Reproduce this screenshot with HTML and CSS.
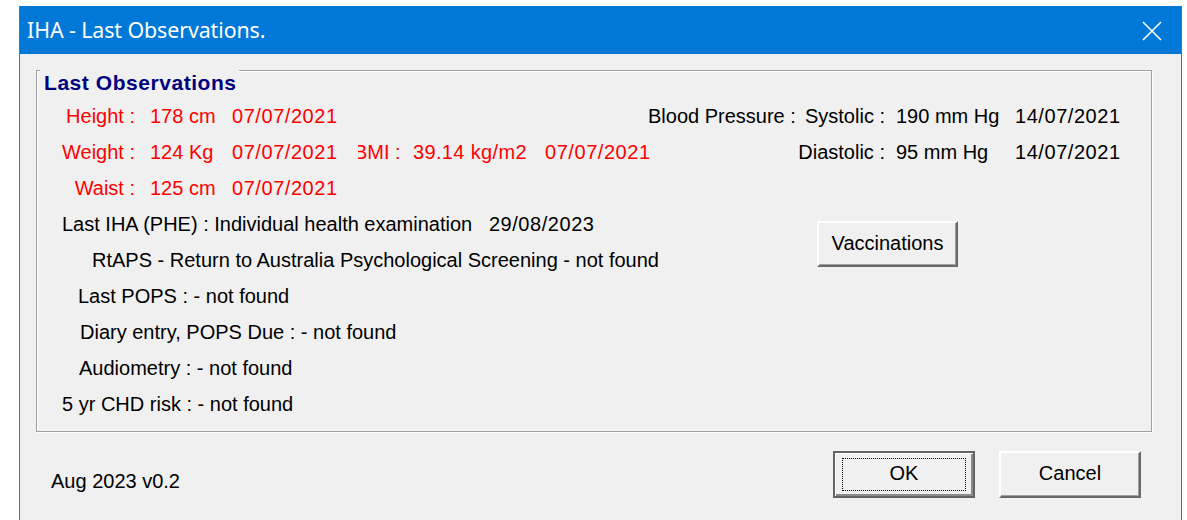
FILE: index.html
```html
<!DOCTYPE html>
<html lang="en">
<head>
<meta charset="utf-8">
<title>IHA - Last Observations.</title>
<link rel="stylesheet" href="styles.css">
</head>
<body>
<div class="window">
  <div class="titlebar">
    <span class="title">IHA - Last Observations.</span>
    <svg class="close" width="20" height="20" viewBox="0 0 20 20" aria-label="Close">
      <path d="M1 1 L19 19 M19 1 L1 19" stroke="#ffffff" stroke-width="1.6" fill="none"/>
    </svg>
  </div>
  <div class="client">
    <div class="group">
      <div class="group-title">Last Observations</div>
      <div class="group-body">
        <div class="col-left">
          <div class="measures">
            <span class="lbl">Height :</span><span class="val">178 cm</span><span class="date num">07/07/2021</span>
            <span class="lbl">Weight :</span><span class="val">124 Kg</span><span class="date num">07/07/2021</span><span class="bmi-lbl">BMI :</span><span class="bmi-val">39.14 kg/m2</span><span class="bmi-date num">07/07/2021</span>
            <span class="lbl">Waist :</span><span class="val">125 cm</span><span class="date num">07/07/2021</span>
          </div>
          <div class="row ind-iha">Last IHA (PHE) : Individual health examination&nbsp;&nbsp;&nbsp;<span class="num">29/08/2023</span></div>
          <div class="row ind-rtaps">RtAPS - Return to Australia Psychological Screening - not found</div>
          <div class="row ind-pops">Last POPS : - not found</div>
          <div class="row ind-diary">Diary entry, POPS Due : - not found</div>
          <div class="row ind-audio">Audiometry : - not found</div>
          <div class="row ind-chd">5 yr CHD risk : - not found</div>
        </div>
        <div class="col-right">
          <div class="bp">
            <span class="bp-head">Blood Pressure :</span><span class="bp-lbl">Systolic :</span><span class="bp-val">190 mm Hg</span><span class="bp-date num">14/07/2021</span>
            <span class="bp-head"></span><span class="bp-lbl">Diastolic :</span><span class="bp-val">95 mm Hg</span><span class="bp-date num">14/07/2021</span>
          </div>
          <button class="btn btn-vacc" type="button">Vaccinations</button>
        </div>
      </div>
    </div>
    <div class="footer">
      <span class="version">Aug 2023 v0.2</span>
      <div class="actions">
        <button class="btn btn-default" type="button"><span class="focus">OK</span></button>
        <button class="btn btn-cancel" type="button">Cancel</button>
      </div>
    </div>
  </div>
</div>
</body>
</html>
```
FILE: styles.css
```css
html, body {
  margin: 0;
  padding: 0;
  background: #ffffff;
}

body {
  font-family: "Liberation Sans", Arial, sans-serif;
  font-size: 20px;
  color: #000000;
}

.window {
  margin: 6px 0 0 19px;
  width: 1161px;
  height: 514px;
  background: #f0f0f0;
  border-left: 1px solid #1a82d8;
  border-right: 1px solid #1a82d8;
  overflow: hidden;
}

/* caption bar */
.titlebar {
  height: 48px;
  margin: 0 -1px;
  background: #0078d7;
  display: flex;
  align-items: center;
  justify-content: space-between;
  padding: 0 20px 0 8px;
}

.title {
  color: #ffffff;
  font-family: "Noto Sans", "Liberation Sans", sans-serif;
  font-size: 21.4px;
  letter-spacing: -0.1px;
  margin-top: -1px;
}

.close {
  display: block;
  margin-top: 1px;
}

.client {
  padding: 16px 29px 0 16px;
}

/* etched group box */
.group {
  height: 359px;
  border: 1px solid #a0a0a0;
  box-shadow: inset 1px 1px 0 #ffffff, 1px 1px 0 #ffffff;
  padding: 1px 0 0 1px;
}

.group-title {
  display: inline-block;
  margin: -4px 0 0 2px;
  padding: 0 2px 0 4px;
  background: #f0f0f0;
  color: #000080;
  font-weight: bold;
  font-size: 21px;
  letter-spacing: 0.55px;
  line-height: 30px;
}

.group-body {
  display: flex;
}

.col-left {
  width: 610px;
  flex: none;
}

/* dates and figures sit a little wider than the labels */
.num {
  letter-spacing: 0.55px;
}

.measures {
  display: grid;
  grid-template-columns: 97px 97px 122px 59px 132px auto;
  grid-template-rows: repeat(3, 36px);
  line-height: 36px;
  color: #ff0000;
  white-space: nowrap;
}

.measures .lbl {
  grid-column: 1;
  text-align: right;
}

.measures .val {
  grid-column: 2;
  padding-left: 15px;
}

.measures .date {
  grid-column: 3;
}

.measures .bmi-lbl {
  grid-column: 4;
  clip-path: inset(0 0 0 4px);
}

.measures .bmi-val {
  grid-column: 5;
  letter-spacing: 0.35px;
}

.measures .bmi-date {
  grid-column: 6;
}

.row {
  line-height: 36px;
  height: 36px;
  white-space: nowrap;
}

.ind-iha { padding-left: 24px; }
.ind-rtaps { padding-left: 54px; }
.ind-pops { padding-left: 40px; }
.ind-diary { padding-left: 42px; }
.ind-audio { padding-left: 41px; }
.ind-chd { padding-left: 24px; }

.col-right {
  display: flex;
  flex-direction: column;
  align-items: flex-start;
}

.bp {
  display: grid;
  grid-template-columns: 150px 87px 130px auto;
  grid-template-rows: repeat(2, 36px);
  line-height: 36px;
  white-space: nowrap;
}

.bp-lbl {
  text-align: right;
}

.bp-val {
  padding-left: 11px;
}

/* push-buttons */
.btn {
  font-family: "Liberation Sans", Arial, sans-serif;
  font-size: 20px;
  color: #000000;
  background: #f0f0f0;
  border: 2px solid;
  border-color: #ffffff #696969 #696969 #ffffff;
  box-shadow: inset -1px -1px 0 #a0a0a0;
  padding: 0;
  margin: 0;
  display: flex;
  align-items: center;
  justify-content: center;
}

.btn-vacc {
  margin: 51px 0 0 169px;
  width: 141px;
  height: 46px;
  padding-bottom: 2px;
}

.footer {
  display: flex;
  align-items: center;
  justify-content: space-between;
  margin-top: 19px;
  padding-right: 11px;
}

.version {
  padding-left: 15px;
  margin-top: 13px;
}

.actions {
  display: flex;
  gap: 24px;
}

.btn-cancel {
  width: 142px;
  height: 47px;
  padding-bottom: 2px;
}

.btn-default {
  width: 142px;
  height: 47px;
  border: 2px solid #646464;
  box-shadow: inset 1px 1px 0 #ffffff, inset -2px -2px 0 #8a8a8a;
  padding: 5px 7px;
}

.focus {
  flex: 1;
  align-self: stretch;
  display: flex;
  align-items: center;
  justify-content: center;
  border: 1px dotted #000000;
  padding-bottom: 2px;
}
```
